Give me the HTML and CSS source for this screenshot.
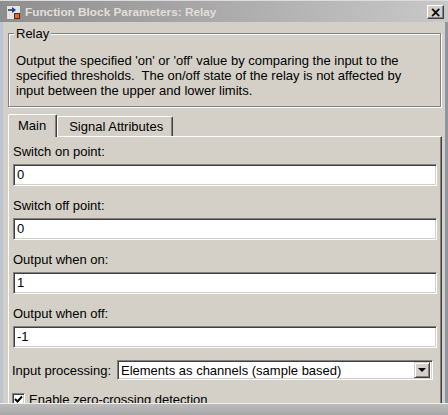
FILE: index.html
```html
<!DOCTYPE html>
<html lang="en">

<head>
  <meta charset="UTF-8">
  <title>Function Block Parameters: Relay</title>
  <link rel="stylesheet" href="styles.css">
</head>

<body>
  <div class="window">
    <div class="titlebar">
      <svg class="app-icon" width="15" height="15" viewBox="0 0 15 15">
        <rect x="0.5" y="0.5" width="14" height="14" fill="#e4e4e4" stroke="#8a8a8a"/>
        <path d="M2 5 H6" stroke="#1c2c5c" stroke-width="1.5"/>
        <path d="M6 2 L10 5 L6 8 Z" fill="#1c3c8c"/>
        <rect x="8.5" y="8.5" width="5" height="5" fill="#d8702c" stroke="#5a2a10"/>
      </svg>
      <span class="title">Function Block Parameters: Relay</span>
      <button class="close-btn">&times;</button>
    </div>

    <div class="client">
      <fieldset class="group">
        <legend>Relay</legend>
        <p class="description">Output the specified 'on' or 'off' value by comparing the input to the<br>specified thresholds.&nbsp; The on/off state of the relay is not affected by<br>input between the upper and lower limits.</p>
      </fieldset>

      <div class="tabs">
        <div class="tab active">Main</div>
        <div class="tab">Signal Attributes</div>
      </div>

      <div class="panel">
        <div class="field-label">Switch on point:</div>
        <div class="edit">0</div>

        <div class="field-label">Switch off point:</div>
        <div class="edit">0</div>

        <div class="field-label">Output when on:</div>
        <div class="edit">1</div>

        <div class="field-label">Output when off:</div>
        <div class="edit">-1</div>

        <div class="combo-row">
          <span class="combo-label">Input processing:</span>
          <div class="combo">
            <span class="combo-text">Elements as channels (sample based)</span>
            <span class="combo-btn"><span class="arrow"></span></span>
          </div>
        </div>

        <div class="check-row">
          <span class="checkbox">
            <svg width="9" height="9" viewBox="0 0 9 9">
              <path d="M1 4 L3.5 6.5 L8 1.5" fill="none" stroke="#000" stroke-width="2"/>
            </svg>
          </span>
          <span>Enable zero-crossing detection</span>
        </div>
      </div>
    </div>

    <div class="bottom-band"></div>
  </div>
</body>
</html>
```

FILE: styles.css
```css
* {
	box-sizing: border-box;
}

body {
	margin: 0;
	padding: 0;
	width: 448px;
	height: 415px;
	overflow: hidden;
	background: #d4d0c8;
	font-family: 'Liberation Sans', Arial, sans-serif;
	font-size: 13px;
	color: #000;
}

.window {
	position: relative;
	width: 448px;
	height: 415px;
	display: flex;
	flex-direction: column;
	overflow: hidden;
}

/* title bar */
.titlebar {
	height: 22px;
	flex: none;
	display: flex;
	align-items: center;
	padding: 1px 5px 0 6px;
	background: linear-gradient(to right, #8e8e8e, #c8c8c8);
	border-top: 1px solid #dcdcdc;
}

.app-icon {
	flex: none;
	margin-right: 4px;
}

.title {
	flex: 1;
	font-weight: bold;
	font-size: 11.8px;
	color: #e2dfd8;
	white-space: nowrap;
}

.close-btn {
	width: 17px;
	height: 14px;
	padding: 0;
	margin-right: -1px;
	background: #d4d0c8;
	border: 1px solid;
	border-color: #fff #404040 #404040 #fff;
	box-shadow: inset -1px -1px 0 #808080;
	font-family: 'DejaVu Sans', sans-serif;
	font-size: 14px;
	font-weight: bold;
	line-height: 11px;
	color: #000;
}

/* client area */
.client {
	flex: 1;
	display: flex;
	flex-direction: column;
	padding: 0 3px 0 5px;
	border-left: 3px solid #bcc6d0;
	border-right: 3px solid #8c96a2;
}

.group {
	margin: 4px 0 0 0;
	width: 433px;
	padding: 12px 4px 8px 7px;
	border: 1px solid #808080;
	box-shadow: 1px 1px 0 #fff, inset 1px 1px 0 #fff;
}

.group legend {
	padding: 0 2px;
	margin-left: -2px;
	line-height: 15px;
	background: #d4d0c8;
}

.description {
	margin: 0;
	line-height: 15px;
	white-space: nowrap;
}

/* tabs */
.tabs {
	display: flex;
	align-items: flex-end;
	height: 22px;
	margin-top: 7px;
	position: relative;
	z-index: 1;
}

.tab {
	height: 20px;
	line-height: 19px;
	padding: 0 9px 0 11px;
	border-top: 1px solid #fff;
	border-left: 1px solid #fff;
	border-right: 1px solid #404040;
	box-shadow: inset -1px 0 0 #808080;
	border-radius: 2px 2px 0 0;
}

.tab.active {
	height: 23px;
	margin-bottom: -1px;
	line-height: 22px;
	padding: 0 10px 2px 9px;
	background: #d4d0c8;
}

.panel {
	flex: 1;
	width: 434px;
	padding: 7px 4px 0 4px;
	border-top: 1px solid #fff;
	border-left: 1px solid #fff;
	border-right: 1px solid #404040;
	box-shadow: inset -1px 0 0 #808080;
}

.field-label {
	line-height: 15px;
	margin-bottom: 5px;
}

.edit {
	height: 22px;
	margin-bottom: 12px;
	padding: 1px 2px 0 3px;
	line-height: 18px;
	background: #fff;
	border: 1px solid;
	border-color: #808080 #fff #fff #808080;
	box-shadow: inset 1px 1px 0 #404040, inset -1px -1px 0 #d4d0c8;
}

.combo-row {
	display: flex;
	align-items: center;
	height: 20px;
}

.combo-label {
	flex: none;
	width: 105px;
	margin-left: -1px;
}

.combo {
	width: 316px;
	height: 20px;
	display: flex;
	align-items: center;
	background: #fff;
	border: 1px solid;
	border-color: #808080 #fff #fff #808080;
	box-shadow: inset 1px 1px 0 #404040, inset -1px -1px 0 #d4d0c8;
	padding: 0 2px 0 3px;
}

.combo-text {
	flex: 1;
}

.combo-btn {
	width: 16px;
	height: 16px;
	display: flex;
	align-items: center;
	justify-content: center;
	background: #d4d0c8;
	border: 1px solid;
	border-color: #d4d0c8 #404040 #404040 #d4d0c8;
	box-shadow: inset 1px 1px 0 #fff, inset -1px -1px 0 #808080;
}

.arrow {
	width: 0;
	height: 0;
	border-left: 4px solid transparent;
	border-right: 4px solid transparent;
	border-top: 4px solid #000;
}

.check-row {
	display: flex;
	align-items: center;
	gap: 4px;
	margin-top: 12px;
	margin-left: -1px;
	line-height: 15px;
}

.checkbox {
	width: 13px;
	height: 13px;
	display: flex;
	align-items: center;
	justify-content: center;
	background: #fff;
	border: 1px solid;
	border-color: #808080 #fff #fff #808080;
	box-shadow: inset 1px 1px 0 #404040, inset -1px -1px 0 #d4d0c8;
}

/* strip cut across the bottom of the capture */
.bottom-band {
	position: absolute;
	left: 0;
	right: 0;
	bottom: 0;
	height: 12px;
	border-top: 1px solid #eeeeee;
	background: linear-gradient(#bcbcbc, #a6a6a6);
}
```
